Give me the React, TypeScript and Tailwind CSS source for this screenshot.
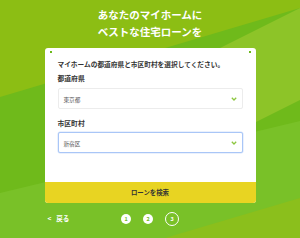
import React from "react";

const font = { fontFamily: '"Noto Sans CJK JP", "Noto Sans", sans-serif' };

function Chevron() {
  return (
    <svg width="6" height="4" viewBox="0 0 6 4" className="shrink-0">
      <path d="M0.8 0.8 L3 3 L5.2 0.8" fill="none" stroke="#8cc63f" strokeWidth="1.3" />
    </svg>
  );
}

function Select({ value, focused }: { value: string; focused?: boolean }) {
  return (
    <div
      className={
        "flex h-[21px] items-center justify-between rounded-[2px] bg-white pl-[5px] pr-[5px] " +
        (focused
          ? "border-[1.5px] border-[#a9c6f7] shadow-[0_0_0_0.5px_#d6e4fb]"
          : "border border-[#ececec]")
      }
    >
      <span className="text-[5.6px] leading-none text-[#555] pt-[4px]">{value}</span>
      <Chevron />
    </div>
  );
}

export default function App() {
  return (
    <div className="relative h-[238px] w-[300px] overflow-hidden" style={font}>
      <svg className="absolute inset-0" width="300" height="238" viewBox="0 0 300 238">
        <rect width="300" height="238" fill="#6fba1b" />
        <polygon points="0,0 300,0 300,8 0,97" fill="#8cbe14" />
        <polygon points="300,8 120,98 120,190 300,100" fill="#8dc428" />
        <polygon points="0,193 300,121 300,238 0,238" fill="#79c128" />
        <polygon points="165,238 300,198 300,238" fill="#8bbf1c" />
      </svg>
      <div className="relative flex flex-col items-center">
        <div className="pt-[7px] text-center text-[10.5px] font-bold leading-[16.5px] text-white">
          <div>あなたのマイホームに</div>
          <div>ベストな住宅ローンを</div>
        </div>
        <div className="relative mt-[8px] w-[211px] overflow-hidden rounded-[3px] bg-white">
          <span className="absolute left-[5px] top-[3px] h-[2px] w-[2px] bg-[#6cb91c]" />
          <span className="absolute right-[5px] top-[3px] h-[2px] w-[2px] bg-[#6cb91c]" />
          <div className="px-[13px] pb-[29px] pt-[11px]">
            <div className="text-[6.7px] font-bold leading-[10px] text-[#333]">
              マイホームの都道府県と市区町村を選択してください。
            </div>
            <div className="mt-[4px] text-[6.8px] font-bold leading-[10px] text-[#333]">都道府県</div>
            <div className="mt-[5px]">
              <Select value="東京都" />
            </div>
            <div className="mt-[9px] text-[6.8px] font-bold leading-[10px] text-[#333]">市区町村</div>
            <div className="mt-[4px]">
              <Select value="新宿区" focused />
            </div>
          </div>
          <div className="flex h-[21px] items-center justify-center bg-[#e8d422] text-[6.4px] font-bold text-[#333]">
            ローンを検索
          </div>
        </div>
        <div className="mt-[8px] grid h-[16px] w-[211px] grid-cols-[1fr_auto_1fr] items-center">
          <div className="flex items-center gap-[5px] pl-[3px] text-[6.5px] font-bold text-white">
            <span>&lt;</span>
            <span>戻る</span>
          </div>
          <div className="flex items-center gap-[12px]">
            <div className="flex h-[10px] w-[10px] items-center justify-center rounded-full bg-white text-[5.5px] font-bold text-[#72bb22]">
              1
            </div>
            <div className="flex h-[10px] w-[10px] items-center justify-center rounded-full bg-white text-[5.5px] font-bold text-[#72bb22]">
              2
            </div>
            <div className="flex h-[14px] w-[14px] items-center justify-center rounded-full border-[1.5px] border-white text-[5.5px] font-bold text-white">
              3
            </div>
          </div>
          <div />
        </div>
      </div>
    </div>
  );
}
